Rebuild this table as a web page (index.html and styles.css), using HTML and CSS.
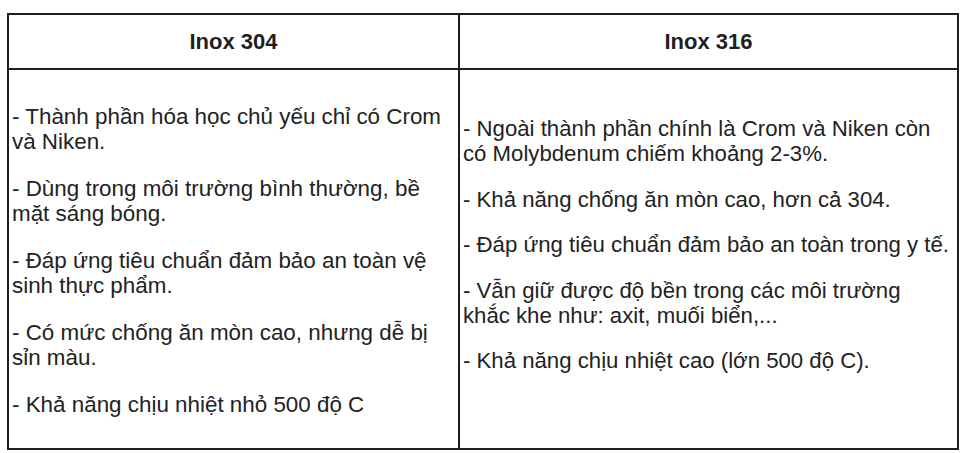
FILE: index.html
```html
<!DOCTYPE html>
<html lang="vi">
<head>
<meta charset="utf-8">
<title>Inox 304 vs Inox 316</title>
<link rel="stylesheet" href="styles.css">
</head>
<body>
<table class="compare">
  <thead>
    <tr class="head-row">
      <th class="col-left">Inox 304</th>
      <th class="col-right">Inox 316</th>
    </tr>
  </thead>
  <tbody>
    <tr class="body-row">
      <td class="cell cell-left">
        <p>- Thành phần hóa học chủ yếu chỉ có Crom và Niken.</p>
        <p>- Dùng trong môi trường bình thường, bề mặt sáng bóng.</p>
        <p>- Đáp ứng tiêu chuẩn đảm bảo an toàn vệ sinh thực phẩm.</p>
        <p>- Có mức chống ăn mòn cao, nhưng dễ bị sỉn màu.</p>
        <p>- Khả năng chịu nhiệt nhỏ 500 độ C</p>
      </td>
      <td class="cell cell-right">
        <p>- Ngoài thành phần chính là Crom và Niken còn có Molybdenum chiếm khoảng 2-3%.</p>
        <p>- Khả năng chống ăn mòn cao, hơn cả 304.</p>
        <p>- Đáp ứng tiêu chuẩn đảm bảo an toàn trong y tế.</p>
        <p>- Vẫn giữ được độ bền trong các môi trường khắc khe như: axit, muối biển,...</p>
        <p>- Khả năng chịu nhiệt cao (lớn 500 độ C).</p>
      </td>
    </tr>
  </tbody>
</table>
</body>
</html>
```
FILE: styles.css
```css
html, body {
  margin: 0;
  padding: 0;
  background: #ffffff;
}

body {
  padding: 13px 0 0 7px;
  font-family: "Liberation Sans", Arial, sans-serif;
  color: #222222;
}

.compare {
  border-collapse: collapse;
  width: 950px;
  table-layout: fixed;
}

.compare th,
.compare td {
  border: 2px solid #1e1e1e;
}

.head-row {
  height: 55px;
}

.body-row {
  height: 380px;
}

.compare th {
  padding: 0;
  font-size: 22px;
  font-weight: bold;
  text-align: center;
  vertical-align: middle;
  color: #1f1f1f;
}

.col-left {
  width: 449px;
}

.col-right {
  width: 497px;
}

.cell {
  vertical-align: top;
  font-size: 22.4px;
  line-height: 25px;
}

.cell p {
  margin: 0;
}

.cell-left {
  padding: 34px 14px 0 3px;
}

.cell-left p + p {
  margin-top: 22px;
}

.cell-right {
  font-size: 22.2px;
  padding: 46px 4px 0 3px;
}

.cell-right p + p {
  margin-top: 20.5px;
}
```
